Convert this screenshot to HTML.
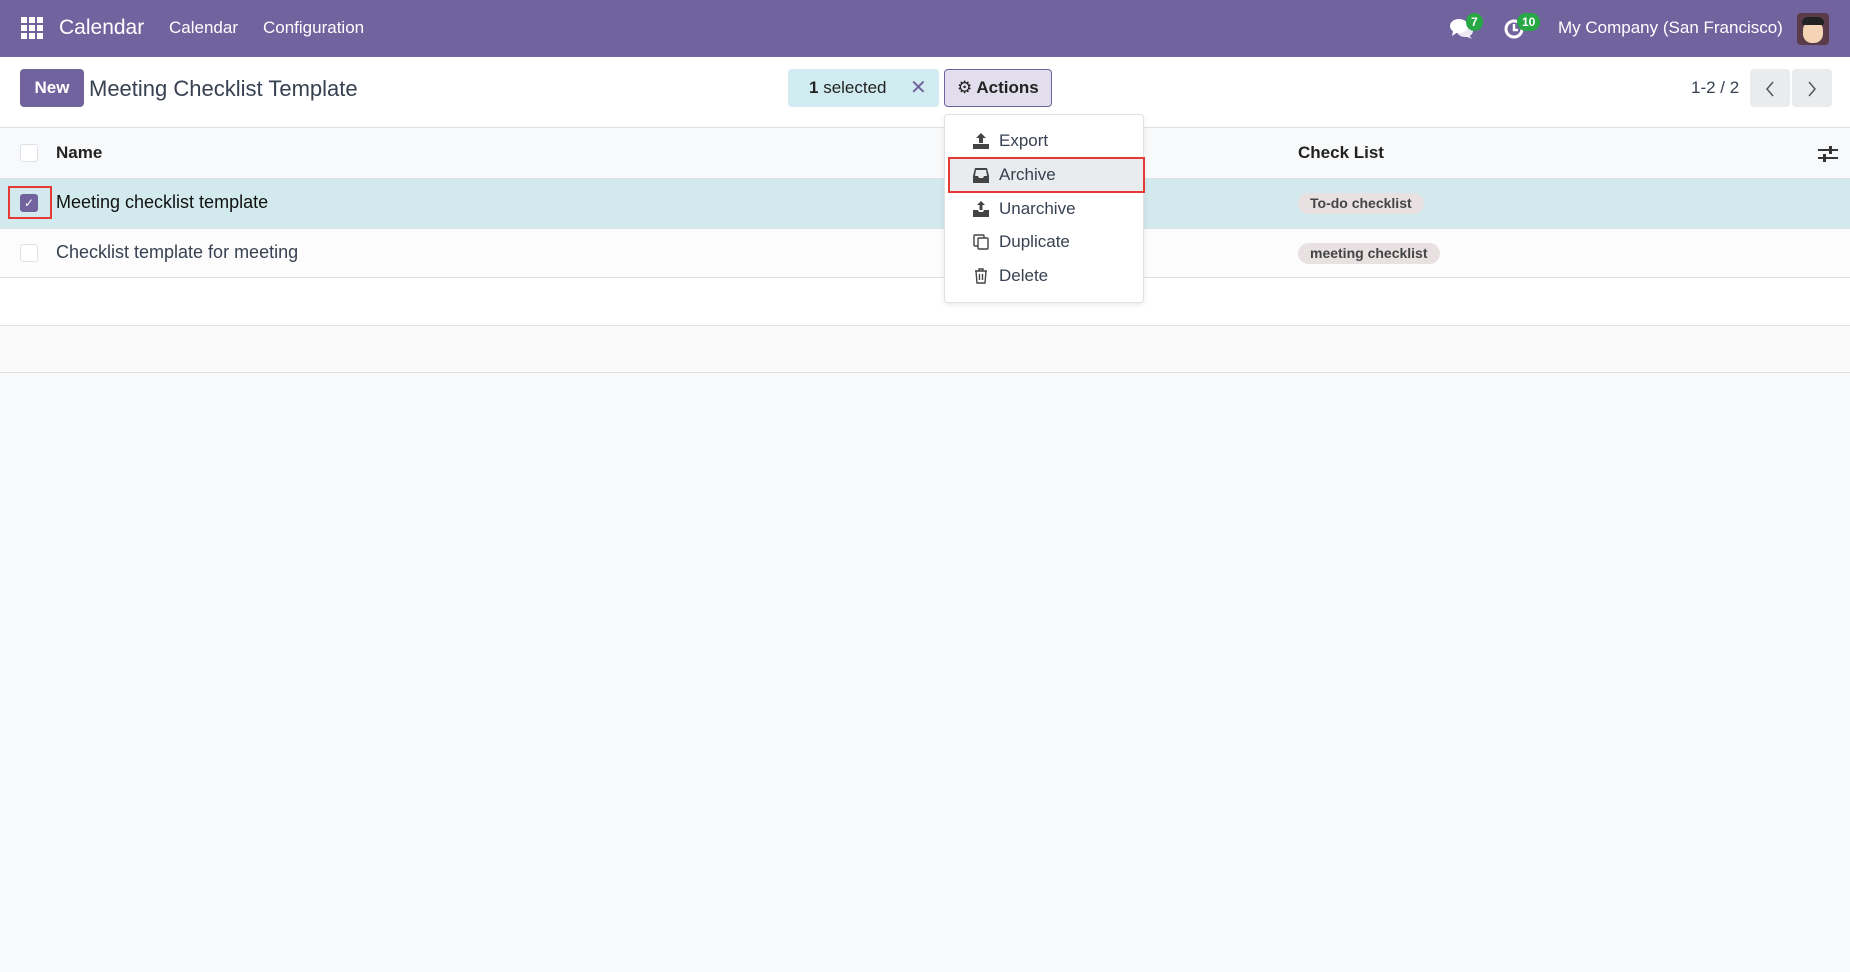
<!DOCTYPE html>
<html><head><meta charset="utf-8"><style>
*{box-sizing:border-box;margin:0;padding:0}
body{width:1850px;height:972px;overflow:hidden;background:#f8f9fa;font-family:"Liberation Sans","DejaVu Sans",sans-serif;color:#374151;position:relative}
.abs{position:absolute}
.nav{left:0;top:0;width:1850px;height:57px;background:#71639e;color:#fff}
.nav span{position:absolute;top:18px;font-size:17px}
.badge{position:absolute;background:#28a745;color:#fff;font-size:12px;font-weight:bold;border-radius:9px;height:18px;line-height:18px;text-align:center;padding:0 5px}
.cp{left:0;top:57px;width:1850px;height:71px;background:#fff;border-bottom:1px solid #dee2e6}
.btn{position:absolute;top:12px;height:38px;border-radius:4px;font-size:17px;line-height:38px}
.row{position:absolute;left:0;width:1850px;border-bottom:1px solid #dee2e6}
.cb{position:absolute;left:20px;width:18px;height:18px;border:1px solid #dee2e6;border-radius:3px;background:#fff}
.tag{position:absolute;left:1298px;height:21px;line-height:21px;border-radius:11px;background:#e9e1e1;font-size:14px;font-weight:bold;color:#444;padding:0 12px}
.dd{left:944px;top:114px;width:200px;height:189px;background:#fff;border:1px solid #dee2e6;border-radius:4px;box-shadow:0 2px 6px rgba(0,0,0,.08)}
.it{position:absolute;left:54px;font-size:17px;color:#374151}
.ic{position:absolute;left:28px;width:16px;height:16px}
</style></head><body>
<div class="abs nav">
 <svg class="abs" style="left:21px;top:17px" width="22" height="22" viewBox="0 0 22 22" fill="#fff"><rect x="0" y="0" width="6" height="6"/><rect x="8" y="0" width="6" height="6"/><rect x="16" y="0" width="6" height="6"/><rect x="0" y="8" width="6" height="6"/><rect x="8" y="8" width="6" height="6"/><rect x="16" y="8" width="6" height="6"/><rect x="0" y="16" width="6" height="6"/><rect x="8" y="16" width="6" height="6"/><rect x="16" y="16" width="6" height="6"/></svg>
 <span style="left:59px;top:16px;font-size:21px">Calendar</span>
 <span style="left:169px">Calendar</span>
 <span style="left:263px">Configuration</span>
 <svg class="abs" style="left:1450px;top:18px" width="24" height="22" viewBox="0 0 24 22" fill="#fff"><ellipse cx="9" cy="8" rx="9" ry="7"/><path d="M3 13 L2 18 L8 14Z"/><ellipse cx="15" cy="13" rx="8" ry="6" opacity=".85"/><path d="M19 17 L22 21 L15 18Z" opacity=".85"/></svg>
 <div class="badge" style="left:1466px;top:13px">7</div>
 <svg class="abs" style="left:1503px;top:18px" width="22" height="22" viewBox="0 0 22 22"><circle cx="11" cy="11" r="8" fill="none" stroke="#fff" stroke-width="3"/><path d="M11 6 V12 H15" stroke="#fff" stroke-width="2.5" fill="none"/></svg>
 <div class="badge" style="left:1517px;top:13px">10</div>
 <span style="left:1558px">My Company (San Francisco)</span>
 <div class="abs" style="left:1797px;top:13px;width:32px;height:32px;border-radius:4px;background:#5a3b4a"><div style="position:absolute;left:6px;top:8px;width:20px;height:22px;border-radius:9px;background:#f5d3b5"></div><div style="position:absolute;left:5px;top:4px;width:22px;height:8px;border-radius:6px 6px 2px 2px;background:#222"></div></div>
</div>
<div class="abs cp">
 <div class="btn" style="left:20px;width:64px;background:#71639e;color:#fff;font-weight:bold;text-align:center">New</div>
 <div class="abs" style="left:89px;top:19px;font-size:22px;color:#374151">Meeting Checklist Template</div>
 <div class="btn" style="left:788px;width:151px;background:#d1ecf1;color:#222;padding-left:21px"><b>1</b> selected<span style="position:absolute;left:122px;color:#71639e;font-size:20px">✕</span></div>
 <div class="btn" style="left:944px;width:108px;background:#e2deee;border:1px solid #71639e;color:#222;font-weight:bold;padding-left:12px;line-height:36px">⚙ Actions</div>
 <div class="abs" style="left:1691px;top:21px;font-size:17px">1-2 / 2</div>
 <div class="btn" style="left:1750px;width:40px;background:#e9ecef"><svg class="abs" style="left:15px;top:12px" width="10" height="16" viewBox="0 0 10 16"><path d="M8 1 L2 8 L8 15" fill="none" stroke="#555" stroke-width="1.5"/></svg></div>
 <div class="btn" style="left:1792px;width:40px;background:#e9ecef"><svg class="abs" style="left:15px;top:12px" width="10" height="16" viewBox="0 0 10 16"><path d="M2 1 L8 8 L2 15" fill="none" stroke="#555" stroke-width="1.5"/></svg></div>
</div>
<div class="row" style="top:128px;height:51px;background:#f8f9fa"><div class="cb" style="top:16px"></div><b style="position:absolute;left:56px;top:15px;font-size:17px;color:#222">Name</b><b style="position:absolute;left:1298px;top:15px;font-size:17px;color:#222">Check List</b>
<svg class="abs" style="left:1818px;top:17px" width="20" height="18" viewBox="0 0 20 18" fill="#333"><rect x="0" y="4" width="20" height="2"/><rect x="0" y="12" width="20" height="2"/><rect x="11" y="1" width="3" height="8"/><rect x="5" y="9" width="3" height="8"/></svg></div>
<div class="row" style="top:179px;height:50px;background:#d2eaee"><div style="position:absolute;left:8px;top:7px;width:44px;height:33px;border:2px solid #e53935"></div><div class="cb" style="top:15px;background:#71639e;border-color:#71639e;color:#fff;font-size:12px;text-align:center;line-height:16px">✓</div><span style="position:absolute;left:56px;top:13px;font-size:18px;color:#111">Meeting checklist template</span><div class="tag" style="top:14px">To-do checklist</div></div>
<div class="row" style="top:229px;height:49px;background:#fcfcfc"><div class="cb" style="top:15px"></div><span style="position:absolute;left:56px;top:13px;font-size:18px">Checklist template for meeting</span><div class="tag" style="top:14px">meeting checklist</div></div>
<div class="row" style="top:278px;height:48px;background:#fff"></div>
<div class="row" style="top:326px;height:47px;background:#fafafa"></div>
<div class="abs dd">
 <svg class="ic" style="top:18px" viewBox="0 0 16 16" fill="#444"><path d="M8 0 L13 5 H10 V10 H6 V5 H3Z"/><rect x="0" y="11" width="16" height="5"/></svg><span class="it" style="top:16px">Export</span>
 <div style="position:absolute;left:3px;top:42px;width:197px;height:36px;background:#e9ecef;border:2px solid #e53935"></div>
 <svg class="ic" style="top:52px" viewBox="0 0 16 16" fill="#444"><path d="M2 1 H14 L16 9 V16 H0 V9Z M3 3 L2 9 H5 L6 11 H10 L11 9 H14 L13 3Z"/></svg><span class="it" style="top:50px">Archive</span>
 <svg class="ic" style="top:86px" viewBox="0 0 16 16" fill="#444"><path d="M8 0 L12 4 H9.5 V9 H6.5 V4 H4Z"/><path d="M0 9 H5 L6 11 H10 L11 9 H16 V16 H0Z"/></svg><span class="it" style="top:84px">Unarchive</span>
 <svg class="ic" style="top:119px" viewBox="0 0 16 16" fill="none" stroke="#444" stroke-width="1.4"><rect x="1" y="1" width="10" height="11" rx="1"/><rect x="5" y="4" width="10" height="11" rx="1" fill="#fff"/></svg><span class="it" style="top:117px">Duplicate</span>
 <svg class="ic" style="top:153px" viewBox="0 0 16 16" fill="none" stroke="#444" stroke-width="1.4"><path d="M2 3 H14 M6 3 V1 H10 V3 M3 3 L4 15 H12 L13 3 M6.5 6 V12 M9.5 6 V12"/></svg><span class="it" style="top:151px">Delete</span>
</div>
</body></html>
